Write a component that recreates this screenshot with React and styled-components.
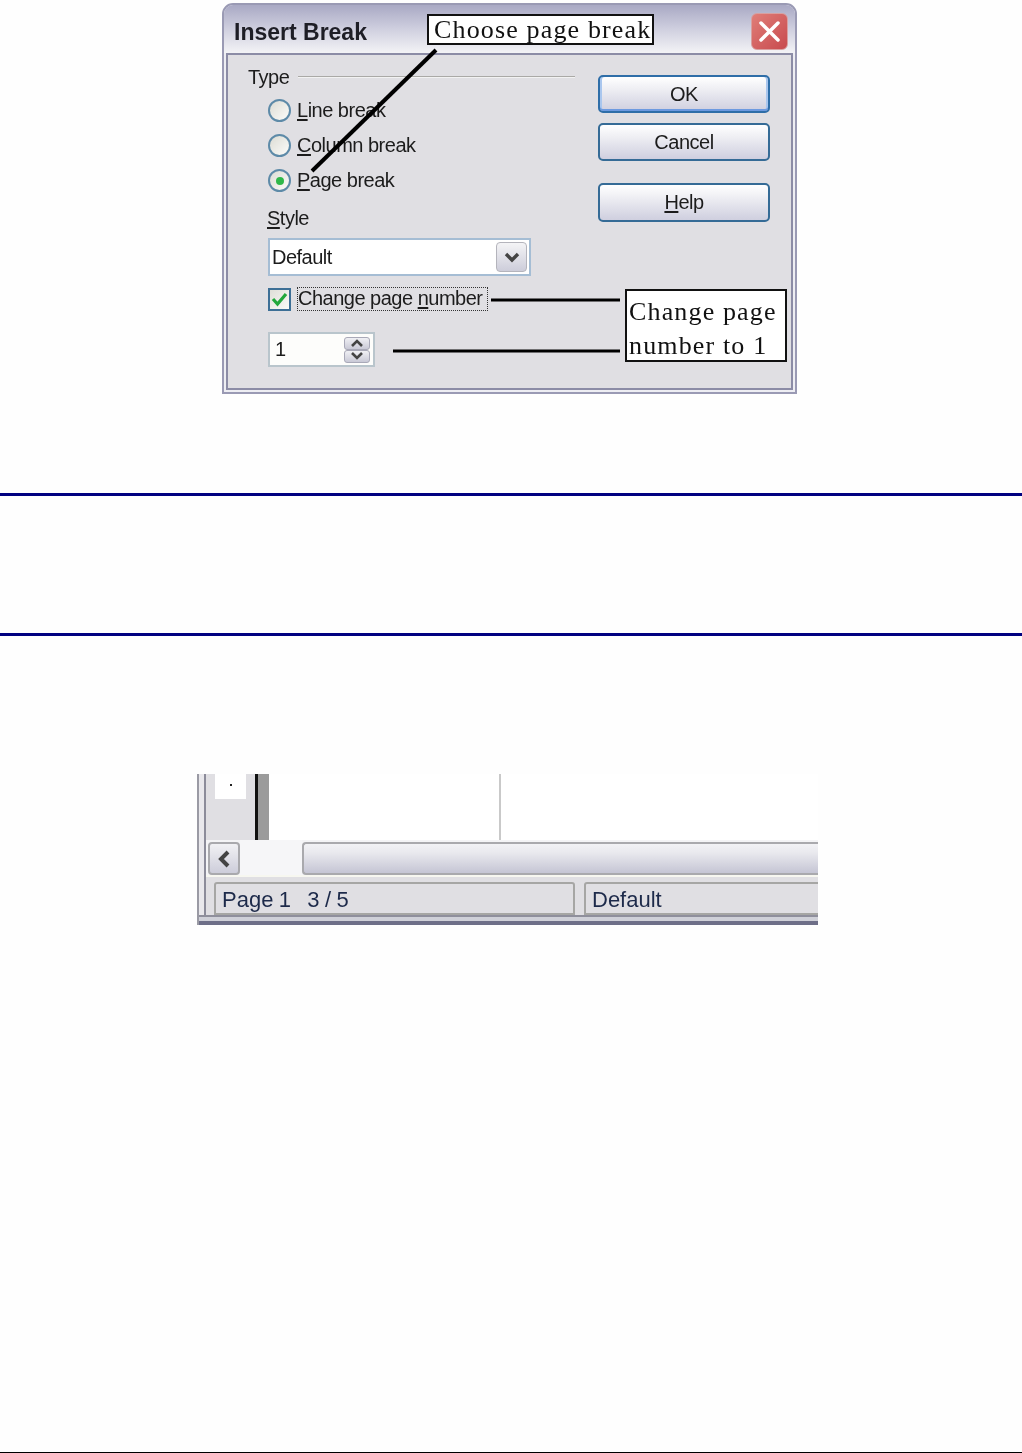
import styled, { createGlobalStyle } from 'styled-components'

const GlobalStyle = createGlobalStyle`
  html, body {
    margin: 0;
    padding: 0;
    background: #fefefe;
  }
`

const Page = styled.div`
  width: 1022px;
  height: 1453px;
  display: flex;
  flex-direction: column;
  overflow: hidden;
  font-family: "Liberation Sans", Arial, sans-serif;
  color: #1c1c1c;
`

const Figure = styled.div`
  position: relative;
  width: 575px;
  height: 391px;
  margin: 3px 0 0 222px;
  flex: none;
`

const Dialog = styled.div`
  box-sizing: border-box;
  width: 100%;
  height: 100%;
  display: flex;
  flex-direction: column;
  border: 2px solid #9a9ab4;
  border-radius: 11px 11px 0 0;
  background: #eeeef3;
  letter-spacing: -0.5px;
  filter: blur(0.45px);
`

const TitleBar = styled.div`
  height: 48px;
  flex: none;
  display: flex;
  align-items: center;
  justify-content: space-between;
  padding: 7px 7px 0 10px;
  box-sizing: border-box;
  border-radius: 9px 9px 0 0;
  background: linear-gradient(#a9a9c4, #cfcfdf 50%, #f3f3f6);
`

const Title = styled.div`
  font-size: 23px;
  font-weight: 700;
  letter-spacing: 0;
  color: #1e1e26;
`

const CloseButton = styled.div`
  width: 37px;
  height: 37px;
  margin-top: -2px;
  display: flex;
  align-items: center;
  justify-content: center;
  border-radius: 6px;
  border: 1px solid #d8a0a0;
  box-sizing: border-box;
  background: linear-gradient(135deg, #e07e78, #c84a4e);
`

const Body = styled.div`
  flex: 1;
  margin: 0 2px 2px;
  padding: 11px 21px 0 20px;
  display: flex;
  gap: 23px;
  border: 2px solid #8c8ca6;
  background: #e0dfe3;
`

const LeftColumn = styled.div`
  width: 327px;
  flex: none;
  display: flex;
  flex-direction: column;
`

const Legend = styled.div`
  height: 22px;
  display: flex;
  align-items: center;
  gap: 9px;
  font-size: 20px;

  &::after {
    content: '';
    flex: 1;
    height: 2px;
    background: linear-gradient(#aaa9a6 50%, #f2f2f2 50%);
  }
`

const Indented = styled.div`
  padding-left: 20px;
  display: flex;
  flex-direction: column;
  align-items: flex-start;
`

const RadioList = styled.div`
  margin-top: 5px;
  display: flex;
  flex-direction: column;
`

const RadioRow = styled.div`
  height: 35px;
  display: flex;
  align-items: center;
  gap: 6px;
  font-size: 20px;
`

const Radio = styled.span`
  box-sizing: border-box;
  width: 23px;
  height: 23px;
  border-radius: 50%;
  border: 2px solid #5d8aa8;
  background: linear-gradient(135deg, #dcdcd4, #fcfcfa);
  display: flex;
  align-items: center;
  justify-content: center;

  &::after {
    content: '';
    width: 8px;
    height: 8px;
    border-radius: 50%;
    background: ${p => (p.$checked ? '#2fb84a' : 'transparent')};
  }
`

const Mnemonic = styled.span`
  text-decoration: underline;
  text-underline-offset: 2px;
`

const StyleLabel = styled.div`
  margin: 8px 0 0 -1px;
  height: 24px;
  line-height: 24px;
  font-size: 20px;
`

const Combo = styled.div`
  box-sizing: border-box;
  margin-top: 8px;
  width: 263px;
  height: 38px;
  padding: 2px;
  display: flex;
  align-items: center;
  justify-content: space-between;
  border: 2px solid #a5bdd4;
  background: #fff;
  font-size: 20px;
`

const ComboText = styled.span`
  padding-left: 0;
`

const ComboButton = styled.div`
  box-sizing: border-box;
  width: 31px;
  height: 30px;
  display: flex;
  align-items: center;
  justify-content: center;
  border: 1px solid #b4b4bc;
  border-radius: 4px;
  background: linear-gradient(#f4f4f6, #cdcdda);
`

const CheckRow = styled.div`
  margin-top: 11px;
  height: 24px;
  display: flex;
  align-items: center;
  gap: 6px;
  font-size: 20px;
`

const CheckBox = styled.span`
  box-sizing: border-box;
  width: 23px;
  height: 23px;
  display: flex;
  align-items: center;
  justify-content: center;
  border: 2px solid #3d6f96;
  background: linear-gradient(135deg, #dfdfd8, #fbfbf8);
`

const FocusLabel = styled.span`
  box-sizing: border-box;
  height: 24px;
  line-height: 23px;
  padding: 0 5px 0 1px;
  outline: 1px dotted #333;
  outline-offset: -1px;
`

const Spin = styled.div`
  box-sizing: border-box;
  margin-top: 21px;
  width: 107px;
  height: 35px;
  padding: 0 3px 0 5px;
  display: flex;
  align-items: center;
  justify-content: space-between;
  border: 2px solid #b9c5cc;
  background: #fdfdfb;
  font-size: 20px;
`

const SpinButtons = styled.div`
  width: 26px;
  display: flex;
  flex-direction: column;
`

const SpinButton = styled.div`
  box-sizing: border-box;
  height: 13px;
  display: flex;
  align-items: center;
  justify-content: center;
  border: 1px solid #a9a9b8;
  border-radius: 3px;
  background: linear-gradient(#f0f0f4, #c9c9d6);
`

const RightColumn = styled.div`
  width: 172px;
  flex: none;
  padding-top: 9px;
  display: flex;
  flex-direction: column;
`

const Button = styled.div`
  box-sizing: border-box;
  height: ${p => (p.$tall ? '39px' : '38px')};
  margin-top: ${p => p.$gap || 0}px;
  display: flex;
  align-items: center;
  justify-content: center;
  font-size: 20px;
  border: 2px solid ${p => (p.$primary ? '#2f6ea8' : '#356b96')};
  border-radius: 5px;
  background: linear-gradient(#ffffff, #f1f1f5 30%, #cfcfdf);
  box-shadow: ${p => (p.$primary ? 'inset 0 -2px 0 #6d9ae0, inset 2px 0 0 #a9c6ee, inset -2px 0 0 #a9c6ee' : 'none')};
`

const Callout = styled.div`
  position: absolute;
  left: ${p => p.$x}px;
  top: ${p => p.$y}px;
  width: ${p => p.$w}px;
  height: ${p => p.$h}px;
  box-sizing: border-box;
  border: 2px solid #111;
  background: #fff;
  color: #111;
  font-family: "Liberation Serif", "Times New Roman", serif;
  font-size: 26px;
  letter-spacing: 1.15px;
  line-height: ${p => p.$lead}px;
  white-space: pre;
  padding: ${p => p.$pad};
  filter: blur(0.3px);
`

const Leaders = styled.svg`
  position: absolute;
  left: 0;
  top: 0;
  pointer-events: none;
`

const Rule = styled.div`
  flex: none;
  height: 3px;
  margin-top: ${p => p.$top}px;
  background: #000080;
`

const FootRule = styled.div`
  flex: none;
  height: 1px;
  margin-top: auto;
  background: #000;
`

const Shot = styled.div`
  flex: none;
  box-sizing: border-box;
  width: 621px;
  height: 151px;
  margin: 138px 0 0 197px;
  display: flex;
  flex-direction: column;
  overflow: hidden;
  background: #e9e8ec;
  border-left: 2px solid #9a9aa4;
  filter: blur(0.45px);
`

const ShotInner = styled.div`
  flex: 1;
  display: flex;
  flex-direction: column;
  margin-left: 5px;
  border-left: 2px solid #8c8c9a;
  background: #e0dfe3;
`

const Workspace = styled.div`
  height: 66px;
  flex: none;
  display: flex;
`

const Margin = styled.div`
  width: 49px;
  flex: none;
  padding-left: 9px;
  box-sizing: border-box;
`

const PageCorner = styled.div`
  width: 31px;
  height: 25px;
  background: #fff;
  display: flex;
  align-items: center;
  justify-content: center;
  padding-bottom: 4px;
  box-sizing: border-box;

  &::after {
    content: '';
    width: 2px;
    height: 2px;
    background: #222;
  }
`

const PageEdge = styled.div`
  width: 14px;
  flex: none;
  box-sizing: border-box;
  background: #9b9b9b;
  border-left: 3px solid #111;
`

const Sheet = styled.div`
  flex: 1;
  background: #fff;
  padding-left: 230px;
`

const SheetGuide = styled.div`
  width: 2px;
  height: 100%;
  background: #c9c9c9;
`

const ScrollRow = styled.div`
  height: 35px;
  flex: none;
  display: flex;
  padding-left: 2px;
  background: #f4f4f6;
  border-bottom: 2px solid #f7f7f0;
`

const ScrollArrow = styled.div`
  box-sizing: border-box;
  width: 32px;
  margin-top: 2px;
  display: flex;
  align-items: center;
  justify-content: center;
  border: 2px solid #a9a9ad;
  border-radius: 4px;
  background: linear-gradient(#f1f1f4, #cdcdda);
`

const ScrollGap = styled.div`
  width: 62px;
  flex: none;
  background: #f6f6f8;
`

const ScrollTrack = styled.div`
  flex: 1;
  margin-top: 2px;
  border: 2px solid #a9a9ad;
  border-right: 0;
  border-radius: 4px 0 0 4px;
  background: linear-gradient(#f2f2f5, #e9e9ee 30%, #c5c5d4);
`

const StatusRow = styled.div`
  height: 38px;
  flex: none;
  padding: 5px 0 0 8px;
  box-sizing: border-box;
  display: flex;
  gap: 9px;
`

const StatusCell = styled.div`
  box-sizing: border-box;
  width: ${p => p.$w}px;
  flex: none;
  height: 33px;
  padding: 2px 0 0 6px;
  display: flex;
  align-items: center;
  white-space: pre;
  font-size: 22px;
  word-spacing: -0.7px;
  color: #1d2a4a;
  border: 2px solid #a6a6a4;
  border-radius: 3px 3px 0 0;
  background: #e0dfe3;
`

const ShotBottom = styled.div`
  flex: 1;
  margin-left: -7px;
  background: linear-gradient(#8f8f9c 0 2px, #cfd0d8 2px 6px, #6e6f88 6px);
`

export default function App() {
  return (
    <Page>
      <GlobalStyle />
      <Figure>
        <Dialog>
          <TitleBar>
            <Title>Insert Break</Title>
            <CloseButton>
              <svg width="23" height="23" viewBox="0 0 23 23">
                <path d="M3 3 L20 20 M20 3 L3 20" stroke="#fff" strokeWidth="3.5" strokeLinecap="round" />
              </svg>
            </CloseButton>
          </TitleBar>
          <Body>
            <LeftColumn>
              <Legend>Type</Legend>
              <Indented>
                <RadioList>
                  <RadioRow>
                    <Radio />
                    <span><Mnemonic>L</Mnemonic>ine break</span>
                  </RadioRow>
                  <RadioRow>
                    <Radio />
                    <span><Mnemonic>C</Mnemonic>olumn break</span>
                  </RadioRow>
                  <RadioRow>
                    <Radio $checked />
                    <span><Mnemonic>P</Mnemonic>age break</span>
                  </RadioRow>
                </RadioList>
                <StyleLabel><Mnemonic>S</Mnemonic>tyle</StyleLabel>
                <Combo>
                  <ComboText>Default</ComboText>
                  <ComboButton>
                    <svg width="16" height="12" viewBox="0 0 16 12">
                      <path d="M2 3 L8 9 L14 3" fill="none" stroke="#444" strokeWidth="3.4" />
                    </svg>
                  </ComboButton>
                </Combo>
                <CheckRow>
                  <CheckBox>
                    <svg width="17" height="15" viewBox="0 0 17 15">
                      <path d="M2 7 L6.5 12 L15 2" fill="none" stroke="#22a83c" strokeWidth="3.2" />
                    </svg>
                  </CheckBox>
                  <FocusLabel>Change page <Mnemonic>n</Mnemonic>umber</FocusLabel>
                </CheckRow>
                <Spin>
                  <span>1</span>
                  <SpinButtons>
                    <SpinButton>
                      <svg width="14" height="8" viewBox="0 0 14 8">
                        <path d="M2 7 L7 2 L12 7" fill="none" stroke="#444" strokeWidth="2.6" />
                      </svg>
                    </SpinButton>
                    <SpinButton>
                      <svg width="14" height="8" viewBox="0 0 14 8">
                        <path d="M2 1 L7 6 L12 1" fill="none" stroke="#444" strokeWidth="2.6" />
                      </svg>
                    </SpinButton>
                  </SpinButtons>
                </Spin>
              </Indented>
            </LeftColumn>
            <RightColumn>
              <Button $primary>OK</Button>
              <Button $gap={10}>Cancel</Button>
              <Button $gap={22} $tall><span><Mnemonic>H</Mnemonic>elp</span></Button>
            </RightColumn>
          </Body>
        </Dialog>
        <Leaders width="575" height="391">
          <path d="M214 47 L90 168" stroke="#000" strokeWidth="4" fill="none" />
          <path d="M269 297 H398 M171 348 H398" stroke="#000" strokeWidth="3" fill="none" />
        </Leaders>
        <Callout $x={205} $y={11} $w={227} $h={31} $lead={27} $pad="0 0 0 5px">Choose page break</Callout>
        <Callout $x={403} $y={286} $w={162} $h={73} $lead={34} $pad="4px 0 0 2px">{'Change page\nnumber to 1'}</Callout>
      </Figure>

      <Rule $top={99} />
      <Rule $top={137} />

      <Shot>
        <ShotInner>
          <Workspace>
            <Margin>
              <PageCorner />
            </Margin>
            <PageEdge />
            <Sheet>
              <SheetGuide />
            </Sheet>
          </Workspace>
          <ScrollRow>
            <ScrollArrow>
              <svg width="16" height="18" viewBox="0 0 16 18">
                <path d="M12 2 L5 9 L12 16" fill="none" stroke="#444" strokeWidth="4" />
              </svg>
            </ScrollArrow>
            <ScrollGap />
            <ScrollTrack />
          </ScrollRow>
          <StatusRow>
            <StatusCell $w={361}>Page 1   3 / 5</StatusCell>
            <StatusCell $w={240}>Default</StatusCell>
          </StatusRow>
          <ShotBottom />
        </ShotInner>
      </Shot>

      <FootRule />
    </Page>
  )
}
